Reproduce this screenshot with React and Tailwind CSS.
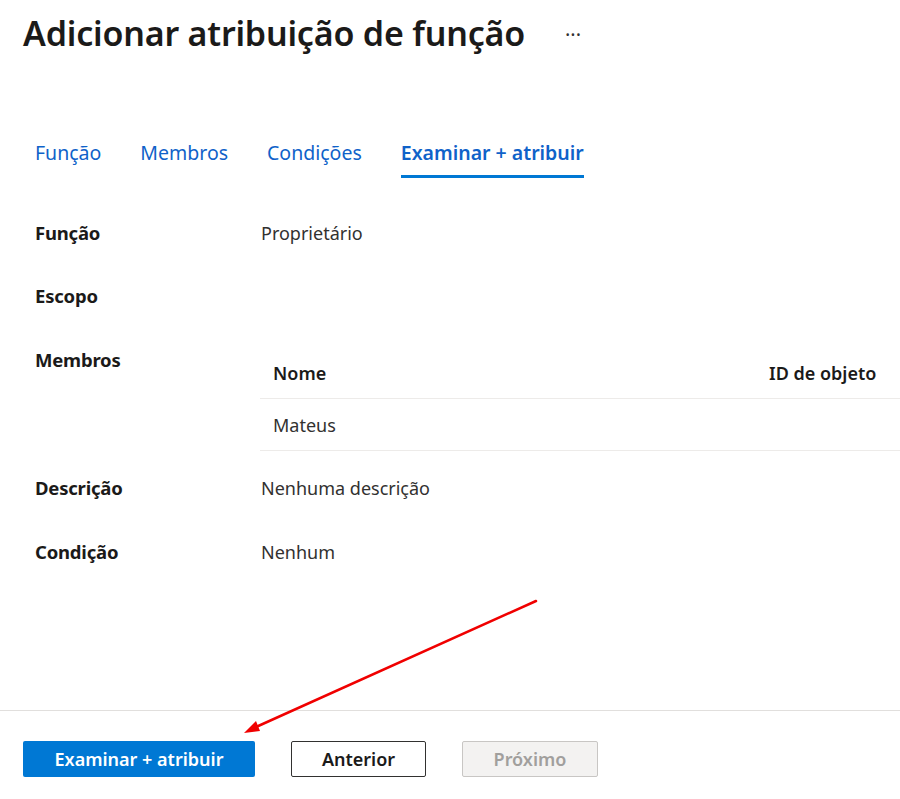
import React from 'react';

const tabs = [
  { name: 'Função', active: false },
  { name: 'Membros', active: false },
  { name: 'Condições', active: false },
  { name: 'Examinar + atribuir', active: true },
];

function Row({ label, children, className = '' }) {
  return (
    <div className={`flex ${className}`}>
      <div className="w-[226px] shrink-0 text-[18.5px] leading-[26px] font-bold text-[#1b1a19] tracking-[-0.2px]">
        {label}
      </div>
      <div className="flex-1 text-[18px] leading-[26px] text-[#323130]">{children}</div>
    </div>
  );
}

export default function App() {
  return (
    <div className="relative h-[799px] w-[900px] overflow-hidden bg-white flex flex-col font-['Noto_Sans',sans-serif]">
      <div className="flex-1">
        {/* Header */}
        <div className="flex items-center pl-[23px] pt-[11px]">
          <h1 className="text-[34px] leading-[44px] font-semibold text-[#1b1a19] tracking-[-0.2px]">
            Adicionar atribuição de função
          </h1>
          <span className="ml-[40px] mt-[4px] text-[20px] text-[#323130] leading-none">···</span>
        </div>

        {/* Tabs */}
        <div className="mt-[84px] flex gap-[39px] pl-[35px]">
          {tabs.map((t) => (
            <div
              key={t.name}
              className={`text-[19.5px] leading-[28px] pb-[8px] border-b-[3px] ${
                t.active
                  ? 'border-[#0078d4] text-[#0f62c9] font-semibold'
                  : 'border-transparent text-[#0f62c9]'
              }`}
            >
              {t.name}
            </div>
          ))}
        </div>

        {/* Details */}
        <div className="mt-[42px] pl-[35px]">
          <Row label="Função" className="mb-[37px]">Proprietário</Row>
          <Row label="Escopo" className="mb-[38px]"> </Row>
          <Row label="Membros" className="mb-[24px]">
            <div className="-ml-[1px]">
              <div className="flex h-[52px] items-center border-b border-[#edebe9] font-semibold text-[#1b1a19]">
                <div className="w-[509px] pl-[13px]">Nome</div>
                <div>ID de objeto</div>
              </div>
              <div className="flex h-[52px] items-center border-b border-[#edebe9]">
                <div className="w-[509px] pl-[13px]">Mateus</div>
                <div></div>
              </div>
            </div>
          </Row>
          <Row label="Descrição" className="mb-[38px]">Nenhuma descrição</Row>
          <Row label="Condição">Nenhum</Row>
        </div>
      </div>

      {/* Footer */}
      <div className="border-t border-[#e1dfdd] pt-[30px] pb-[22px] pl-[23px] flex gap-[36px]">
        <button className="h-[36px] w-[232px] rounded-[2px] bg-[#0078d4] text-white text-[18px] font-semibold">
          Examinar + atribuir
        </button>
        <button className="h-[36px] w-[135px] rounded-[2px] border border-[#323130] bg-white text-[#1b1a19] text-[18px] font-semibold">
          Anterior
        </button>
        <button className="h-[36px] w-[136px] rounded-[2px] border border-[#c8c6c4] bg-[#f3f2f1] text-[#a19f9d] text-[18px] font-semibold">
          Próximo
        </button>
      </div>

      {/* Annotation arrow */}
      <svg className="absolute left-0 top-0 pointer-events-none" width="900" height="799" viewBox="0 0 900 799">
        <line x1="536" y1="601" x2="256" y2="727" stroke="#f00000" strokeWidth="2.5" strokeLinecap="round" />
        <polygon points="244,733 256,721 260,731" fill="#f00000" />
      </svg>
    </div>
  );
}
